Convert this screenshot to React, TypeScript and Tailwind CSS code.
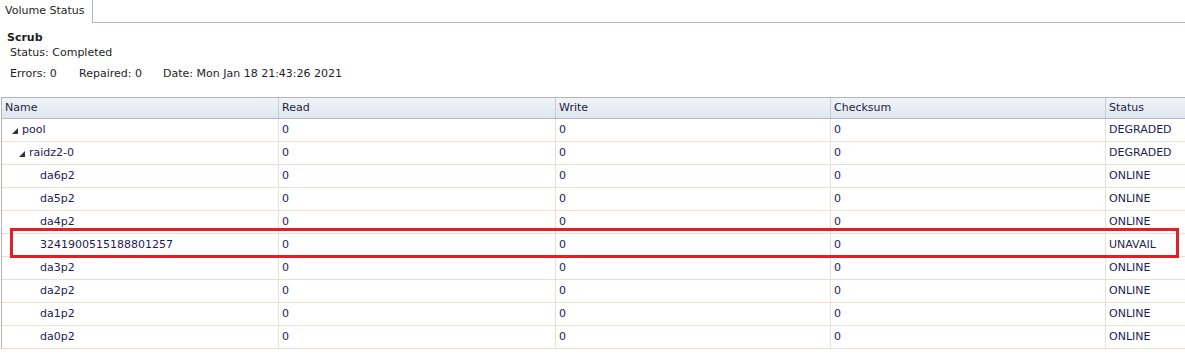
import { Fragment } from 'react';

type Row = {
  name: string;
  depth: number;
  expandable?: boolean;
  read: string;
  write: string;
  checksum: string;
  status: string;
};

const rows: Row[] = [
  { name: 'pool', depth: 0, expandable: true, read: '0', write: '0', checksum: '0', status: 'DEGRADED' },
  { name: 'raidz2-0', depth: 1, expandable: true, read: '0', write: '0', checksum: '0', status: 'DEGRADED' },
  { name: 'da6p2', depth: 2, read: '0', write: '0', checksum: '0', status: 'ONLINE' },
  { name: 'da5p2', depth: 2, read: '0', write: '0', checksum: '0', status: 'ONLINE' },
  { name: 'da4p2', depth: 2, read: '0', write: '0', checksum: '0', status: 'ONLINE' },
  { name: '3241900515188801257', depth: 2, read: '0', write: '0', checksum: '0', status: 'UNAVAIL' },
  { name: 'da3p2', depth: 2, read: '0', write: '0', checksum: '0', status: 'ONLINE' },
  { name: 'da2p2', depth: 2, read: '0', write: '0', checksum: '0', status: 'ONLINE' },
  { name: 'da1p2', depth: 2, read: '0', write: '0', checksum: '0', status: 'ONLINE' },
  { name: 'da0p2', depth: 2, read: '0', write: '0', checksum: '0', status: 'ONLINE' },
];

const indent = ['pl-[10px]', 'pl-[17px]', 'pl-[38px]'];

function Triangle() {
  return (
    <svg width="6" height="6" viewBox="0 0 6 6" className="mr-[4px] mt-[2px] shrink-0">
      <path d="M6 0 L6 6 L0 6 Z" fill="#333" />
    </svg>
  );
}

export default function App() {
  const cols = 'grid grid-cols-[277px_277px_275px_275px_1fr]';
  return (
    <div className="h-[357px] w-[1185px] overflow-hidden bg-white text-[11px] text-[#1c1c55]" style={{ fontFamily: '"DejaVu Sans", Verdana, sans-serif' }}>
      <div className="flex h-[23px]">
        <div className="flex w-[93px] items-center border-r border-[#aeb6c4] pl-[5px] text-[#1e1e1e]">Volume Status</div>
        <div className="flex-1 border-b border-[#aeb6c4]" />
      </div>

      <div className="px-[7px] pt-[8px]">
        <div className="font-bold leading-[13px] text-[#1e1e1e]">Scrub</div>
        <div className="mt-[2px] pl-[3px] leading-[14px] text-[#1e1e1e]">Status: Completed</div>
        <div className="mt-[7px] flex pl-[3px] leading-[14px]">
          <span className="w-[69px] text-[#1e1e1e]">Errors: 0</span>
          <span className="w-[84px] text-[#1e1e1e]">Repaired: 0</span>
          <span className="text-[#1e1e1e]">Date: Mon Jan 18 21:43:26 2021</span>
        </div>
      </div>

      <div className="relative ml-[1px] mt-[16px] border-l border-t border-[#b4b4b4]">
        <div className={`${cols} h-[21px] border-b border-[#b0b8c4] bg-gradient-to-b from-[#f0f4f9] to-[#dfe6ef] text-[#1e1e3c]`}>
          {['Name', 'Read', 'Write', 'Checksum', 'Status'].map((h, i) => (
            <div key={h} className={`flex items-center pl-[3px] ${i < 4 ? 'border-r border-[#c9ced6]' : ''}`}>
              {h}
            </div>
          ))}
        </div>
        {rows.map((r) => (
          <div key={r.name} className={`${cols} h-[23px] border-b border-[#ecdfd3]`}>
            <div className={`flex items-center border-r border-[#ecdfd3] ${indent[r.depth]}`}>
              {r.expandable ? <Triangle /> : null}
              {r.name}
            </div>
            {[r.read, r.write, r.checksum].map((v, i) => (
              <Fragment key={i}>
                <div className="flex items-center border-r border-[#ecdfd3] pl-[3px]">{v}</div>
              </Fragment>
            ))}
            <div className="flex items-center pl-[3px]">{r.status}</div>
          </div>
        ))}
        <div className="pointer-events-none absolute left-[8px] top-[130px] h-[30px] w-[1169px] border-[3px] border-[#e41e26]" />
      </div>
    </div>
  );
}
